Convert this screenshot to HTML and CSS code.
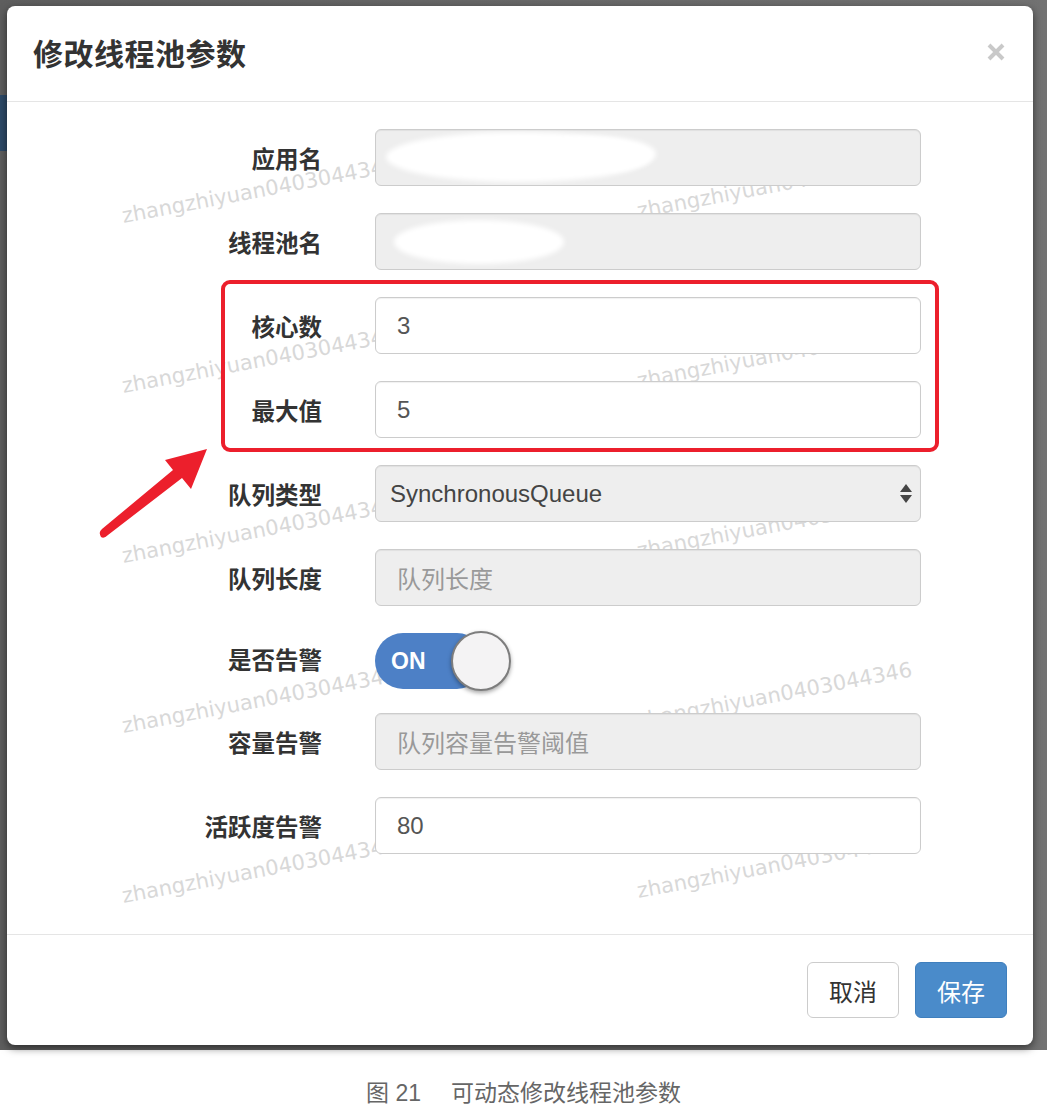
FILE: index.html
```html
<!DOCTYPE html>
<html lang="zh-CN">
<head>
<meta charset="utf-8">
<title>修改线程池参数</title>
<link rel="stylesheet" href="styles.css">
</head>
<body>
<div class="stage">
  <div class="bg-nav"></div>
  <div class="modal">
    <div class="modal-header">
      <div class="title">修改线程池参数</div>
      <svg class="close" width="20" height="20" viewBox="0 0 20 20"><path d="M3 3 L17 17 M17 3 L3 17" stroke="#c9c9c9" stroke-width="4" stroke-linecap="butt"/></svg>
    </div>
    <div class="modal-body">
      <div class="wm-layer">
        <span class="wm wm-l" style="top:104px">zhangzhiyuan0403044346</span>
        <span class="wm wm-l" style="top:274px">zhangzhiyuan0403044346</span>
        <span class="wm wm-l" style="top:444px">zhangzhiyuan0403044346</span>
        <span class="wm wm-l" style="top:614px">zhangzhiyuan0403044346</span>
        <span class="wm wm-l" style="top:784px">zhangzhiyuan0403044346</span>
        <span class="wm wm-r" style="top:99px">zhangzhiyuan0403044346</span>
        <span class="wm wm-r" style="top:269px">zhangzhiyuan0403044346</span>
        <span class="wm wm-r" style="top:439px">zhangzhiyuan0403044346</span>
        <span class="wm wm-r" style="top:609px">zhangzhiyuan0403044346</span>
        <span class="wm wm-r" style="top:779px">zhangzhiyuan0403044346</span>
      </div>
      <div class="form">
        <div class="label">应用名</div>
        <div class="field readonly"><span class="blot blot1"></span><span class="blot blot1b"></span></div>
        <div class="label">线程池名</div>
        <div class="field readonly"><span class="blot blot2"></span></div>
        <div class="label">核心数</div>
        <div class="field">3</div>
        <div class="label">最大值</div>
        <div class="field">5</div>
        <div class="label">队列类型</div>
        <div class="field select readonly">SynchronousQueue
          <svg class="arrows" width="12" height="20" viewBox="0 0 12 20"><path d="M6 0 L12 8 L0 8 Z M0 11 L12 11 L6 19 Z" fill="#444"/></svg>
        </div>
        <div class="label">队列长度</div>
        <div class="field readonly placeholder">队列长度</div>
        <div class="label label-toggle">是否告警</div>
        <div class="toggle-cell">
          <div class="toggle"><span class="on">ON</span><span class="knob"></span></div>
        </div>
        <div class="label">容量告警</div>
        <div class="field readonly placeholder">队列容量告警阈值</div>
        <div class="label">活跃度告警</div>
        <div class="field">80</div>
      </div>
    </div>
    <div class="modal-footer">
      <button class="btn btn-default">取消</button>
      <button class="btn btn-primary">保存</button>
    </div>
    <div class="highlight"></div>
    <svg class="arrow" width="120" height="110" viewBox="0 0 120 110">
      <path d="M6 103 Q3 98 7 95 L78 36 L70 26 L112 15 L96 55 L87 44 L13 101 Q9 105 6 103 Z" fill="#ec1f2c"/>
    </svg>
  </div>
</div>
<div class="caption">图 21<span class="cap-gap"></span>可动态修改线程池参数</div>
</body>
</html>
```
FILE: styles.css
```css
* { box-sizing: border-box; }
body {
  margin: 0;
  background: #fff;
  font-family: "Liberation Sans", "Noto Sans CJK SC", sans-serif;
}
.stage {
  position: relative;
  height: 1050px;
  padding: 6px 0 0 7px;
  background: linear-gradient(90deg, #5e5e5e 0, #686868 50%, #727272 100%);
}
.bg-nav {
  position: absolute;
  left: 0;
  top: 95px;
  width: 10px;
  height: 56px;
  background: #2d4a68;
}
.modal {
  position: relative;
  width: 1026px;
  background: #fff;
  border-radius: 8px;
  box-shadow: 0 3px 8px rgba(0, 0, 0, 0.55);
  display: flex;
  flex-direction: column;
}
.modal-header {
  height: 96px;
  border-bottom: 1px solid #e5e5e5;
  display: flex;
  align-items: center;
  justify-content: space-between;
  padding: 0 27px 4px 26px;
}
.title {
  font-size: 30px;
  font-weight: bold;
  color: #333;
  letter-spacing: 0.5px;
}
.modal-body {
  position: relative;
  height: 832px;
  padding-top: 27px;
}
.wm-layer {
  position: absolute;
  inset: 0;
  overflow: hidden;
  pointer-events: none;
}
.wm {
  position: absolute;
  font-family: "DejaVu Sans", sans-serif;
  font-size: 21px;
  line-height: 20px;
  color: #d8d8d8;
  white-space: nowrap;
  transform: rotate(-10.7deg);
  transform-origin: 0 100%;
}
.wm-l { left: 117px; }
.wm-r { left: 632px; }
.form {
  position: relative;
  z-index: 1;
  display: grid;
  grid-template-columns: 315px 546px;
  grid-template-rows: repeat(6, 57px) 53px 57px 57px;
  column-gap: 53px;
  row-gap: 27px;
}
.label {
  display: flex;
  align-items: center;
  justify-content: flex-end;
  font-size: 23.5px;
  font-weight: bold;
  color: #333;
}
.label-toggle { padding-bottom: 2px; }
.field {
  position: relative;
  display: flex;
  align-items: center;
  padding-left: 21px;
  border: 1px solid #cccccc;
  border-radius: 6px;
  background: #fff;
  font-size: 24px;
  color: #555;
  box-shadow: inset 0 1px 1px rgba(0, 0, 0, 0.06);
  overflow: hidden;
}
.field.readonly { background: #eeeeee; }
.field.placeholder { color: #999; }
.field.select { padding-left: 14px; color: #444; }
.arrows {
  position: absolute;
  right: 8px;
  top: 18px;
}
.blot {
  position: absolute;
  background: #fff;
  border-radius: 50%;
  filter: blur(2.5px);
}
.blot1 { left: 10px; top: 2px; width: 265px; height: 50px; }
.blot1b { left: 150px; top: 6px; width: 130px; height: 36px; }
.blot2 { left: 18px; top: 6px; width: 170px; height: 44px; }
.toggle-cell {
  display: flex;
  align-items: flex-start;
}
.toggle {
  position: relative;
  width: 137px;
  height: 56px;
}
.on {
  position: absolute;
  left: 0;
  top: 0;
  width: 110px;
  height: 56px;
  padding-left: 16px;
  border-radius: 28px;
  background: #4d80c6;
  color: #fff;
  font-size: 23px;
  font-weight: bold;
  display: flex;
  align-items: center;
}
.knob {
  position: absolute;
  left: 76px;
  top: -2px;
  width: 60px;
  height: 60px;
  border-radius: 50%;
  background: #f4f3f4;
  border: 2px solid #7d7d7d;
  box-shadow: 0 2px 4px rgba(0, 0, 0, 0.35);
}
.modal-footer {
  border-top: 1px solid #e5e5e5;
  padding: 27px 26px 27px 0;
  display: flex;
  justify-content: flex-end;
  gap: 16px;
}
.btn {
  width: 92px;
  height: 56px;
  border-radius: 6px;
  font-family: "Liberation Sans", "Noto Sans CJK SC", sans-serif;
  font-size: 24px;
  padding: 0;
}
.btn-default {
  background: #fff;
  border: 1px solid #cccccc;
  color: #333;
}
.btn-primary {
  background: #4a8bca;
  border: 1px solid #3f7fbd;
  color: #fff;
}
.highlight {
  position: absolute;
  left: 214px;
  top: 274px;
  width: 718px;
  height: 172px;
  border: 4px solid #ec1f2c;
  border-radius: 9px;
  pointer-events: none;
}
.arrow {
  position: absolute;
  left: 88px;
  top: 428px;
}
.caption {
  text-align: center;
  padding-top: 29px;
  font-size: 23px;
  color: #666;
  line-height: 28px;
}
.cap-gap {
  display: inline-block;
  width: 30px;
}
```
